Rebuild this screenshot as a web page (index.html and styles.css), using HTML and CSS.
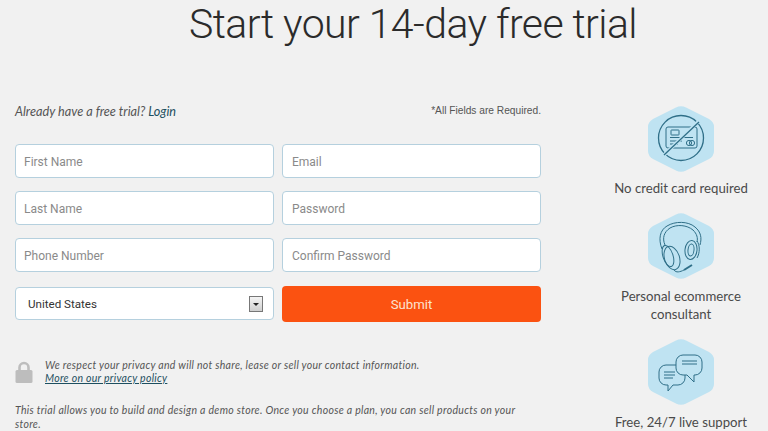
FILE: index.html
```html
<!DOCTYPE html>
<html lang="en">
<head>
    <meta charset="UTF-8">
    <meta name="viewport" content="width=device-width, initial-scale=1.0">
    <title>Start your 14-day free trial</title>
    <link rel="stylesheet" href="styles.css">
</head>
<body>
    <h1 class="page-title">Start your 14-day free trial</h1>

    <div class="signup">
        <div class="form-column">
            <div class="form-top">
                <span class="have-trial">Already have a free trial? <a href="#">Login</a></span>
                <span class="required-note">*All Fields are Required.</span>
            </div>

            <form class="form-grid">
                <input class="field" type="text" placeholder="First Name">
                <input class="field" type="text" placeholder="Email">
                <input class="field" type="text" placeholder="Last Name">
                <input class="field" type="text" placeholder="Password">
                <input class="field" type="text" placeholder="Phone Number">
                <input class="field" type="text" placeholder="Confirm Password">
                <div class="country-select">
                    <span>United States</span>
                    <span class="select-arrow"></span>
                </div>
                <button class="submit-button" type="button">Submit</button>
            </form>

            <div class="privacy">
                <svg class="lock-icon" width="18" height="22" viewBox="0 0 18 22">
                    <path d="M4.500 10V6.500a4.500 4.500 0 0 1 9 0V10" fill="none" stroke="#bdbdbd" stroke-width="2.600"/>
                    <rect x="0.500" y="9" width="17" height="13" rx="1.500" fill="#bdbdbd"/>
                </svg>
                <p>We respect your privacy and will not share, lease or sell your contact information.<br><a href="#">More on our privacy policy</a></p>
            </div>

            <p class="trial-note">This trial allows you to build and design a demo store. Once you choose a plan, you can sell products on your store.</p>
        </div>

        <div class="perks">
            <div class="perk">
                <svg class="hex-icon" width="68" height="68" viewBox="0 0 68 68">
                    <path class="hex" d="M29 2.500Q34 0 39 2.500L62 14Q67 17 67 22V46Q67 51 62 54L39 65.500Q34 68 29 65.500L6 54Q1 51 1 46V22Q1 17 6 14Z"/>
                    <g class="line">
                        <circle cx="34" cy="33" r="22.500" stroke-width="1.300"/>
                        <rect x="19" y="22" width="31" height="21" rx="2"/>
                        <rect x="24" y="25" width="8" height="5" rx="0.500"/>
                        <path d="M23 32.500h23M23 36h12M23 39h8"/>
                        <circle cx="42" cy="38" r="2.600"/>
                        <circle cx="45" cy="38" r="2.600"/>
                        <path d="M52 16L17 50" stroke="#bfe3f2" stroke-width="3.500"/>
                        <path d="M52 17L17 50" stroke-width="1.300"/>
                    </g>
                </svg>
                <p>No credit card required</p>
            </div>
            <div class="perk">
                <svg class="hex-icon" width="68" height="68" viewBox="0 0 68 68">
                    <path class="hex" d="M29 2.500Q34 0 39 2.500L62 14Q67 17 67 22V46Q67 51 62 54L39 65.500Q34 68 29 65.500L6 54Q1 51 1 46V22Q1 17 6 14Z"/>
                    <g class="line">
                        <path d="M15 37C11 27 13 18 20 14C28 9 41 9 48 15C54 20 55 26 53 33"/>
                        <path d="M18 33C15 26 17 20 23 16C30 12 40 13 46 18C50 22 51 26 50 30"/>
                        <ellipse cx="25" cy="46" rx="7.500" ry="12" transform="rotate(-18 25 46)"/>
                        <ellipse cx="21" cy="44" rx="5" ry="11" transform="rotate(-18 21 44)"/>
                        <ellipse cx="44" cy="38" rx="6" ry="9.500" transform="rotate(6 44 38)"/>
                        <ellipse cx="44" cy="38" rx="3" ry="6" transform="rotate(6 44 38)"/>
                        <path d="M50 29C53 33 53 41 50 46"/>
                        <path d="M27 58C29 61 33 60 37 58"/>
                        <path d="M37 58L45 53" stroke-width="2"/>
                    </g>
                </svg>
                <p>Personal ecommerce consultant</p>
            </div>
            <div class="perk">
                <svg class="hex-icon" width="68" height="68" viewBox="0 0 68 68">
                    <path class="hex" d="M29 2.500Q34 0 39 2.500L62 14Q67 17 67 22V46Q67 51 62 54L39 65.500Q34 68 29 65.500L6 54Q1 51 1 46V22Q1 17 6 14Z"/>
                    <g class="line">
                        <path d="M19 27H31A7 7 0 0 1 38 34V40A7 7 0 0 1 31 47H26L21 53V47H19A7 7 0 0 1 12 40V34A7 7 0 0 1 19 27Z"/>
                        <path d="M36 17H48A7 7 0 0 1 55 24V30A7 7 0 0 1 48 37H47V44L40 37H36A7 7 0 0 1 29 30V24A7 7 0 0 1 36 17Z" class="bubble"/>
                        <path d="M17 34H28M17 37H28M17 40H26M35 23H50M35 26H50"/>
                    </g>
                </svg>
                <p>Free, 24/7 live support</p>
            </div>
        </div>
    </div>
</body>
</html>
```

FILE: styles.css
```css
html, body {
    margin: 0;
    padding: 0;
    height: 100%;
    overflow: hidden;
}

body {
    background: #f1f1f1;
    font-family: Lato, "Open Sans", sans-serif;
    color: #444;
}

.page-title {
    margin: 0;
    padding: 1px 0 0 58px;
    font-family: Roboto, sans-serif;
    font-size: 41px;
    font-weight: 300;
    line-height: 46px;
    letter-spacing: -0.570px;
    text-align: center;
    color: #2b2b2b;
}

.signup {
    display: flex;
    padding: 53px 0 0 15px;
}

.form-column {
    width: 526px;
    flex-shrink: 0;
}

.form-top {
    display: flex;
    justify-content: space-between;
    align-items: center;
    height: 22px;
}

.have-trial {
    font-size: 12.700px;
    font-style: italic;
    color: #555;
}

.have-trial a {
    color: #1d4f60;
    text-decoration: none;
}

.required-note {
    margin-bottom: 2px;
    font-family: "Liberation Sans", sans-serif;
    font-size: 10.200px;
    color: #555;
}

.form-grid {
    display: grid;
    grid-template-columns: 259px 259px;
    column-gap: 8px;
    row-gap: 13px;
    margin-top: 22px;
}

.field {
    box-sizing: border-box;
    width: 100%;
    height: 34px;
    padding: 1px 9px 0;
    background: #fff;
    border: 1px solid #b5d0de;
    border-radius: 4px;
    font-family: Roboto, sans-serif;
    font-size: 12px;
    color: #444;
}

.field:nth-child(odd) {
    padding-left: 8px;
}

.field::placeholder {
    color: #8a8a8a;
    opacity: 1;
}

.country-select {
    box-sizing: border-box;
    height: 33px;
    margin-top: 2px;
    display: flex;
    justify-content: space-between;
    align-items: center;
    padding: 0 10px 0 12px;
    background: #fff;
    border: 1px solid #b5d0de;
    border-radius: 4px;
    font-family: Roboto, sans-serif;
    font-size: 11.600px;
    color: #333;
}

.select-arrow {
    box-sizing: border-box;
    width: 14px;
    height: 16px;
    border: 1px solid #777;
    background: linear-gradient(#f4f4f4, #cfcfcf);
    position: relative;
}

.select-arrow::after {
    content: "";
    position: absolute;
    left: 3px;
    top: 6px;
    border: 3px solid transparent;
    border-top: 3px solid #222;
}

.submit-button {
    height: 36px;
    margin-top: 1px;
    background: #fb5211;
    border: 0;
    border-radius: 4px;
    font-family: Roboto, sans-serif;
    font-size: 13.200px;
    color: #fbe3d0;
}

.privacy {
    display: flex;
    align-items: center;
    gap: 12px;
    margin-top: 37px;
    font-size: 10.500px;
    font-style: italic;
    letter-spacing: 0.290px;
    color: #555;
}

.privacy p {
    margin: 0;
    line-height: 13px;
}

.privacy a {
    color: #1d4f60;
}

.trial-note {
    margin: 18px 0 0;
    font-size: 10.500px;
    font-style: italic;
    line-height: 14px;
    letter-spacing: 0.300px;
    color: #555;
}

.perks {
    width: 176px;
    margin-left: 53px;
    margin-top: 5px;
    display: flex;
    flex-direction: column;
    align-items: center;
    gap: 15px;
    text-align: center;
}

.perk p {
    margin: 7px 0 0;
    font-size: 13.200px;
    line-height: 18px;
    color: #4a4a4a;
}

.perk:first-child p {
    margin-top: 6px;
}

.hex-icon {
    display: block;
    margin: 0 auto;
}

.hex {
    fill: #bfe3f2;
}

.line {
    fill: none;
    stroke: #2f6f88;
    stroke-width: 1;
}

.bubble {
    fill: #bfe3f2;
}
```
